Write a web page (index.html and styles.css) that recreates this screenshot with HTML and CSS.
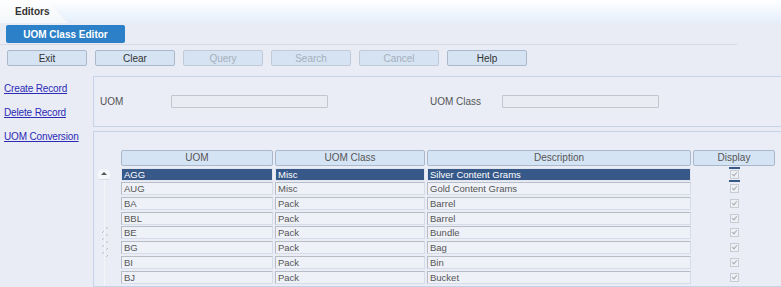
FILE: index.html
```html
<!DOCTYPE html>
<html lang="en">
<head>
    <meta charset="UTF-8">
    <title>UOM Class Editor</title>
    <link rel="stylesheet" href="styles.css">
</head>
<body>
    <div class="tabbar">
        <div class="tab">Editors</div>
    </div>

    <div class="main">
        <div class="titlebar">
            <button class="title-btn">UOM Class Editor</button>
        </div>

        <div class="toolbar">
            <button class="tool">Exit</button>
            <button class="tool">Clear</button>
            <button class="tool disabled">Query</button>
            <button class="tool disabled">Search</button>
            <button class="tool disabled">Cancel</button>
            <button class="tool">Help</button>
        </div>

        <div class="content">
            <div class="links">
                <a href="#">Create Record</a>
                <a href="#">Delete Record</a>
                <a href="#">UOM Conversion</a>
            </div>

            <div class="panels">
                <div class="panel search">
                    <span class="field-label">UOM</span>
                    <span class="field-input"></span>
                    <span class="field-label second">UOM Class</span>
                    <span class="field-input"></span>
                </div>

                <div class="panel results">
                    <div class="gutter">
                        <div class="scroll-up"></div>
                        <div class="track"></div>
                        <svg class="grip" width="10" height="32" viewBox="0 0 10 32">
                            <g fill="#b9c0cc">
                                <rect x="6" y="0" width="1" height="1"/><rect x="5" y="1" width="1" height="1"/>
                                <rect x="2" y="4" width="1" height="1"/><rect x="1" y="5" width="1" height="1"/>
                                <rect x="6" y="7" width="1" height="1"/><rect x="5" y="8" width="1" height="1"/>
                                <rect x="2" y="11" width="1" height="1"/><rect x="1" y="12" width="1" height="1"/>
                                <rect x="6" y="14" width="1" height="1"/><rect x="5" y="15" width="1" height="1"/>
                                <rect x="2" y="18" width="1" height="1"/><rect x="1" y="19" width="1" height="1"/>
                                <rect x="6" y="21" width="1" height="1"/><rect x="5" y="22" width="1" height="1"/>
                                <rect x="2" y="25" width="1" height="1"/><rect x="1" y="26" width="1" height="1"/>
                                <rect x="6" y="28" width="1" height="1"/><rect x="5" y="29" width="1" height="1"/>
                            </g>
                        </svg>
                    </div>

                    <div class="grid">
                        <div class="head">UOM</div>
                        <div class="head">UOM Class</div>
                        <div class="head">Description</div>
                        <div class="head">Display</div>

                        <div class="cell sel">AGG</div>
                        <div class="cell sel">Misc</div>
                        <div class="cell sel">Silver Content Grams</div>
                        <div class="check-cell focus"><span class="check"></span></div>

                        <div class="cell">AUG</div>
                        <div class="cell">Misc</div>
                        <div class="cell">Gold Content Grams</div>
                        <div class="check-cell"><span class="check"></span></div>

                        <div class="cell">BA</div>
                        <div class="cell">Pack</div>
                        <div class="cell">Barrel</div>
                        <div class="check-cell"><span class="check"></span></div>

                        <div class="cell">BBL</div>
                        <div class="cell">Pack</div>
                        <div class="cell">Barrel</div>
                        <div class="check-cell"><span class="check"></span></div>

                        <div class="cell">BE</div>
                        <div class="cell">Pack</div>
                        <div class="cell">Bundle</div>
                        <div class="check-cell"><span class="check"></span></div>

                        <div class="cell">BG</div>
                        <div class="cell">Pack</div>
                        <div class="cell">Bag</div>
                        <div class="check-cell"><span class="check"></span></div>

                        <div class="cell">BI</div>
                        <div class="cell">Pack</div>
                        <div class="cell">Bin</div>
                        <div class="check-cell"><span class="check"></span></div>

                        <div class="cell">BJ</div>
                        <div class="cell">Pack</div>
                        <div class="cell">Bucket</div>
                        <div class="check-cell"><span class="check"></span></div>
                    </div>
                </div>
            </div>
        </div>
    </div>
</body>
</html>
```

FILE: styles.css
```css
body {
    margin: 0;
    width: 781px;
    height: 287px;
    overflow: hidden;
    font-family: "Liberation Sans", Arial, sans-serif;
    font-size: 10px;
    color: #555;
    background-color: #e9ecf4;
}

/* tab strip */
.tabbar {
    height: 23px;
    background: linear-gradient(#ffffff, #e4eefa);
}

.tab {
    width: 68px;
    height: 23px;
    box-sizing: border-box;
    padding: 6px 0 0 15px;
    font-weight: bold;
    color: #333;
    background: linear-gradient(#ffffff, #f3f6fa);
    clip-path: polygon(0 0, 46px 0, 68px 23px, 0 23px);
}

.titlebar {
    height: 21px;
    padding: 2px 0 0 6px;
    box-sizing: border-box;
}

.title-btn {
    width: 119px;
    height: 18px;
    padding: 0;
    border: none;
    border-radius: 2px;
    background-color: #2c80c7;
    color: #fff;
    font-family: inherit;
    font-size: 10px;
    font-weight: bold;
}

/* toolbar */
.toolbar {
    display: flex;
    gap: 8px;
    margin-right: 44px;
    padding: 5px 7px 10px;
    border-top: 1px solid #d5dae6;
}

.tool {
    width: 80px;
    height: 16px;
    padding: 0;
    border: 1px solid #aab8cb;
    border-radius: 2px;
    background-color: #d5e3f2;
    color: #333;
    font-family: inherit;
    font-size: 10px;
}

.tool.disabled {
    color: #a7afbb;
    border-color: #c0cad8;
}

/* body */
.content {
    display: grid;
    grid-template-columns: 93px 1fr;
}

.links {
    display: flex;
    flex-direction: column;
    gap: 12px;
    padding: 7px 0 0 4px;
}

.links a {
    color: #2b2bb5;
    line-height: 12px;
    letter-spacing: -0.15px;
}

.panel {
    border: 1px solid #c6d4ea;
    border-right: none;
    background-color: #eaedf5;
}

.search {
    display: flex;
    align-items: center;
    height: 51px;
    padding-left: 6px;
    box-sizing: border-box;
}

.field-label {
    width: 71px;
    color: #555;
}

.field-label.second {
    margin-left: 102px;
    width: 72px;
}

.field-input {
    width: 157px;
    height: 13px;
    box-sizing: border-box;
    border: 1px solid #c2c6ce;
    border-radius: 1px;
    background-color: #e9ecf3;
}

.results {
    display: flex;
    margin-top: 4px;
    padding-top: 18px;
    height: 136px;
    overflow: hidden;
}

.gutter {
    position: relative;
    width: 27px;
    padding-top: 18px;
}

.scroll-up {
    position: relative;
    width: 12px;
    height: 10px;
    margin: 1px 0 0 4px;
    border-radius: 5px 5px 2px 2px;
    background-color: #f5f7fb;
    border-bottom: 1px solid #d5dae3;
}

.scroll-up::after {
    content: "";
    position: absolute;
    left: 3px;
    top: 3px;
    border-left: 3px solid transparent;
    border-right: 3px solid transparent;
    border-bottom: 3px solid #555;
}

.track {
    width: 1px;
    height: 110px;
    margin-left: 10px;
    background-color: #f3f5f9;
}

.grip {
    position: absolute;
    left: 7px;
    top: 77px;
}

.grid {
    display: grid;
    grid-template-columns: 152px 150px 264px 82px;
    grid-template-rows: 16px;
    grid-auto-rows: 13px;
    column-gap: 2px;
    row-gap: 1.7px;
    align-content: start;
}

.head {
    margin-bottom: 0.3px;
    border: 1px solid #a9b8cc;
    border-radius: 2px;
    background-color: #d5e4f4;
    color: #555;
    text-align: center;
    line-height: 14px;
}

.cell {
    box-sizing: border-box;
    padding-left: 2px;
    border: 1px solid #d7dde8;
    border-top-color: #b7bcc5;
    border-left-color: #b7bcc5;
    background-color: #eef1f7;
    font-size: 9.5px;
    line-height: 11px;
    white-space: nowrap;
}

.cell.sel {
    background-color: #36598a;
    border-color: #dfe4ee;
    color: #fff;
}

.check-cell {
    position: relative;
    display: flex;
    justify-content: center;
    align-items: center;
}

.check {
    width: 9px;
    height: 9px;
    box-sizing: border-box;
    border: 1px solid #c7cbd3;
    background-color: #eef0f4;
    position: relative;
}

.check::after {
    content: "";
    position: absolute;
    left: 2px;
    top: 0px;
    width: 2px;
    height: 4px;
    border-right: 1px solid #a8adb6;
    border-bottom: 1px solid #a8adb6;
    transform: rotate(40deg);
}

.check-cell.focus::before,
.check-cell.focus::after {
    content: "";
    position: absolute;
    left: 36px;
    width: 11px;
    height: 2px;
    background-color: #36598a;
}

.check-cell.focus::before {
    top: -1px;
}

.check-cell.focus::after {
    bottom: -1px;
}
```
